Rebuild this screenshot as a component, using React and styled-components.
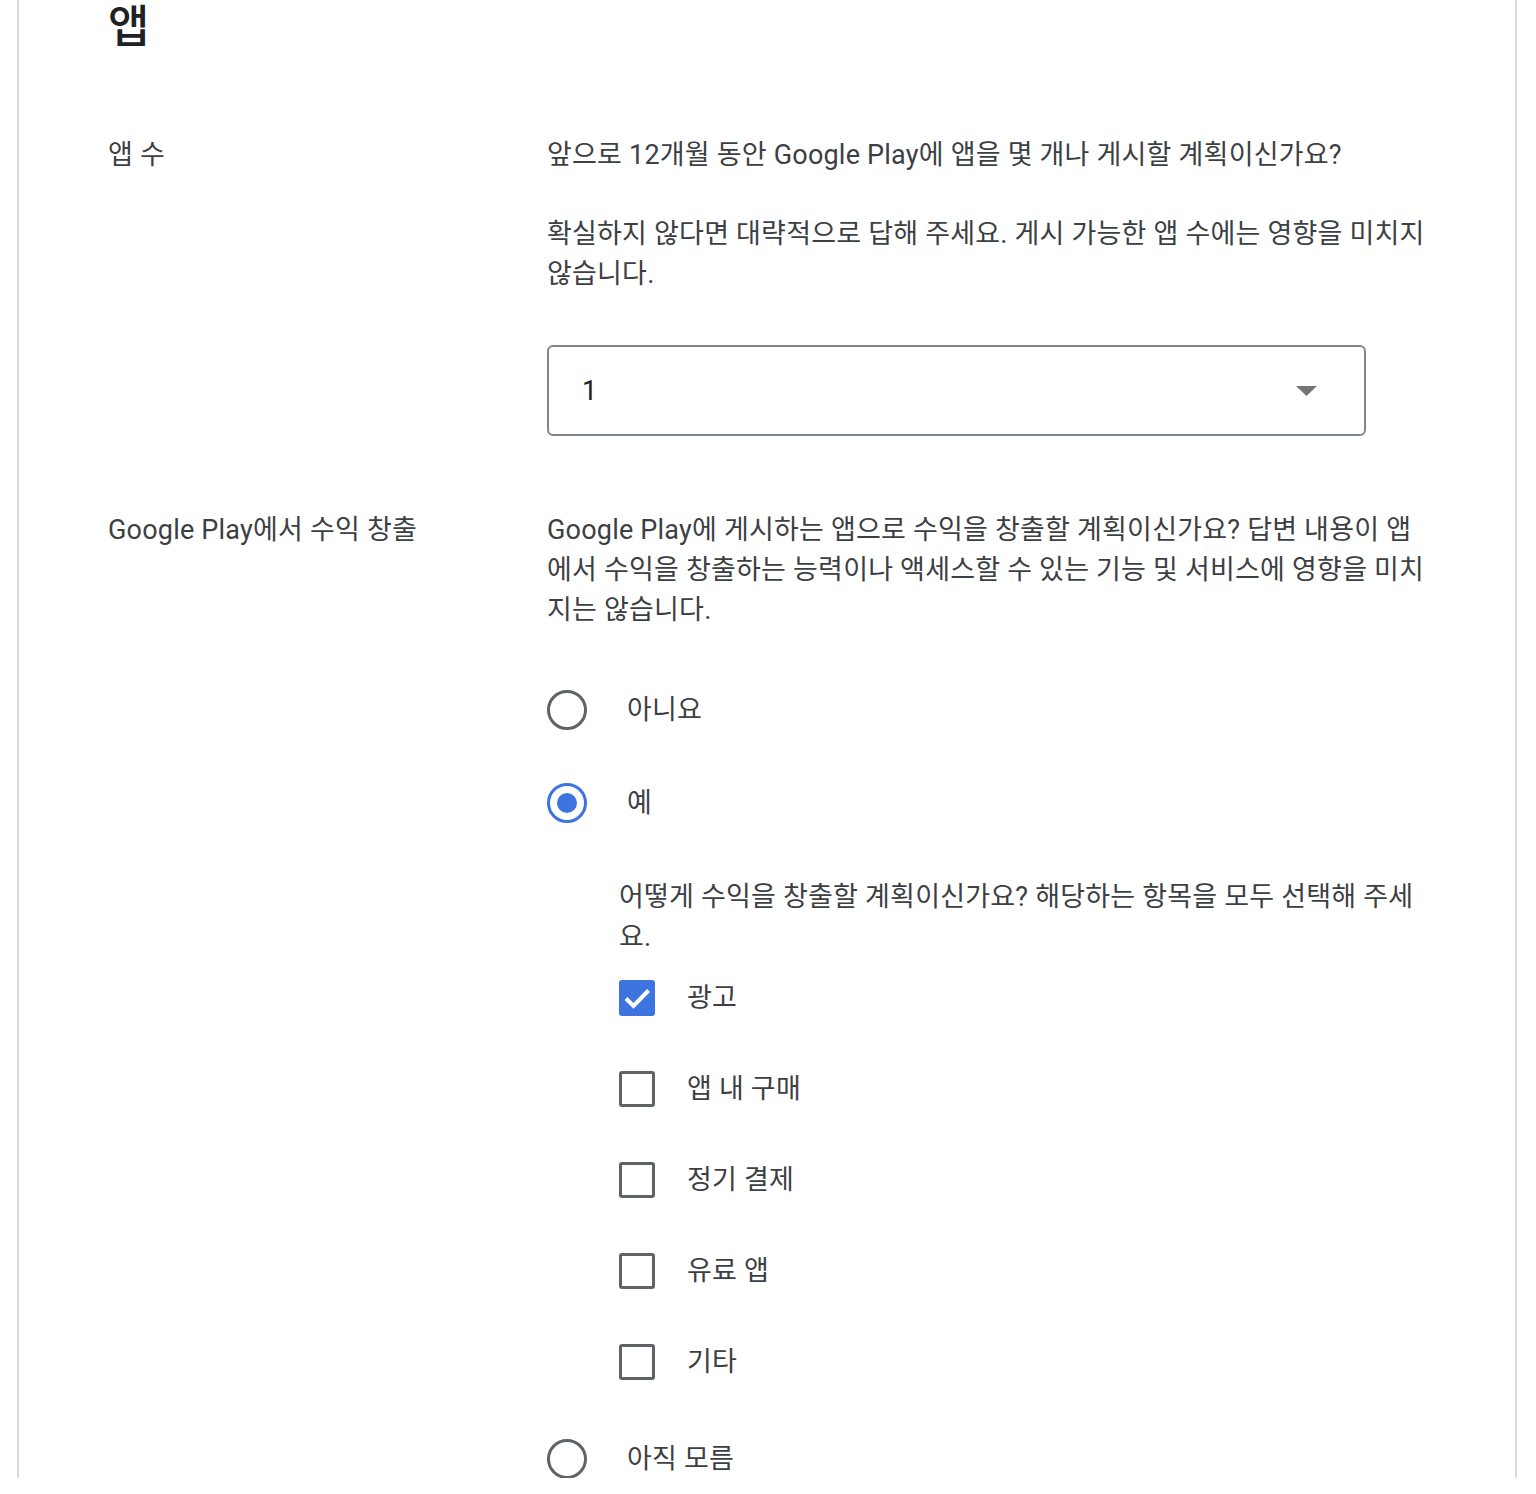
import React from "react";
import styled, { createGlobalStyle } from "styled-components";

const Global = createGlobalStyle`
  html, body { margin: 0; padding: 0; background: #ffffff; }
  body {
    font-family: "Roboto", "Noto Sans CJK KR", sans-serif;
    color: #3c4043;
    -webkit-font-smoothing: antialiased;
  }
`;

const Page = styled.div`
  padding-left: 17px;
  width: 1500px;
`;

const Card = styled.section`
  box-sizing: border-box;
  height: 1478px;
  overflow: hidden;
  border-left: 2px solid #dadce0;
  border-right: 2px solid #dadce0;
  padding-left: 89px;
`;

const Title = styled.h1`
  margin: 0;
  padding-top: 1px;
  font-size: 45px;
  line-height: 54px;
  font-weight: 500;
  color: #202124;
`;

const Row = styled.div`
  display: grid;
  grid-template-columns: 439px 883px;
  margin-top: ${(p) => p.$top}px;
`;

const Label = styled.div`
  font-size: 27px;
  letter-spacing: 0.2px;
  line-height: 40px;
  color: #3c4043;
`;

const Content = styled.div`
  display: flex;
  flex-direction: column;
`;

const Text = styled.p`
  margin: ${(p) => p.$top || 0}px 0 0 0;
  font-size: 27px;
  letter-spacing: 0.2px;
  line-height: 40px;
  color: #3c4043;
`;

const SelectBox = styled.div`
  box-sizing: border-box;
  margin-top: 51px;
  width: 819px;
  height: 91px;
  border: 2px solid #80868b;
  border-radius: 6px;
  display: flex;
  align-items: center;
  justify-content: space-between;
  padding: 0 47px 0 33px;
  font-size: 27px;
  color: #202124;
`;

const Options = styled.div`
  display: flex;
  flex-direction: column;
  gap: 53px;
  margin-top: 60px;
`;

const OptionRow = styled.label`
  display: flex;
  align-items: center;
  gap: ${(p) => p.$gap}px;
  height: 40px;
  margin-top: ${(p) => p.$extra || 0}px;
  font-size: 27px;
  letter-spacing: 0.2px;
  line-height: 40px;
  color: #3c4043;
`;

const RadioCircle = styled.span`
  box-sizing: border-box;
  width: 40px;
  height: 40px;
  flex: none;
  border-radius: 50%;
  border: 3.3px solid ${(p) => (p.$checked ? "#3c74e0" : "#5f6368")};
  display: flex;
  align-items: center;
  justify-content: center;
  &::after {
    content: "";
    display: ${(p) => (p.$checked ? "block" : "none")};
    width: 20px;
    height: 20px;
    border-radius: 50%;
    background: #3c74e0;
  }
`;

const SubBlock = styled.div`
  padding-left: 72px;
  margin-top: 1px;
  display: flex;
  flex-direction: column;
`;

const Checks = styled.div`
  display: flex;
  flex-direction: column;
  gap: 51px;
  margin-top: 21px;
`;

const CheckBox = styled.span`
  box-sizing: border-box;
  width: 36px;
  height: 36px;
  flex: none;
  border-radius: 3px;
  border: ${(p) => (p.$checked ? "none" : "3.3px solid #5f6368")};
  background: ${(p) => (p.$checked ? "#3c74e0" : "transparent")};
  display: flex;
  align-items: center;
  justify-content: center;
`;

const Arrow = () => (
  <svg width="21" height="10" viewBox="0 0 21 10">
    <path d="M0 0 L21 0 L10.5 10 Z" fill="#757575" />
  </svg>
);

const Check = () => (
  <svg width="36" height="36" viewBox="0 0 36 36">
    <path d="M7 18.5 L14.5 26 L29.5 10.5" fill="none" stroke="#ffffff" strokeWidth="4" />
  </svg>
);

const checkItems = [
  { label: "광고", checked: true },
  { label: "앱 내 구매", checked: false },
  { label: "정기 결제", checked: false },
  { label: "유료 앱", checked: false },
  { label: "기타", checked: false },
];

export default function App() {
  return (
    <>
      <Global />
      <Page>
        <Card>
          <Title>앱</Title>
          <Row $top={80}>
            <Label>앱 수</Label>
            <Content>
              <Text>앞으로 12개월 동안 Google Play에 앱을 몇 개나 게시할 계획이신가요?</Text>
              <Text $top={39}>
                확실하지 않다면 대략적으로 답해 주세요. 게시 가능한 앱 수에는 영향을 미치지 않습니다.
              </Text>
              <SelectBox>
                <span>1</span>
                <Arrow />
              </SelectBox>
            </Content>
          </Row>
          <Row $top={74}>
            <Label>Google Play에서 수익 창출</Label>
            <Content>
              <Text>
                Google Play에 게시하는 앱으로 수익을 창출할 계획이신가요? 답변 내용이 앱에서 수익을 창출하는 능력이나 액세스할 수 있는 기능 및 서비스에 영향을 미치지는 않습니다.
              </Text>
              <Options>
                <OptionRow $gap={40}>
                  <RadioCircle />
                  아니요
                </OptionRow>
                <OptionRow $gap={40}>
                  <RadioCircle $checked />
                  예
                </OptionRow>
                <SubBlock>
                  <Text>어떻게 수익을 창출할 계획이신가요? 해당하는 항목을 모두 선택해 주세요.</Text>
                  <Checks>
                    {checkItems.map((c) => (
                      <OptionRow key={c.label} $gap={32}>
                        <CheckBox $checked={c.checked}>{c.checked && <Check />}</CheckBox>
                        {c.label}
                      </OptionRow>
                    ))}
                  </Checks>
                </SubBlock>
                <OptionRow $gap={40} $extra={4}>
                  <RadioCircle />
                  아직 모름
                </OptionRow>
              </Options>
            </Content>
          </Row>
        </Card>
      </Page>
    </>
  );
}
